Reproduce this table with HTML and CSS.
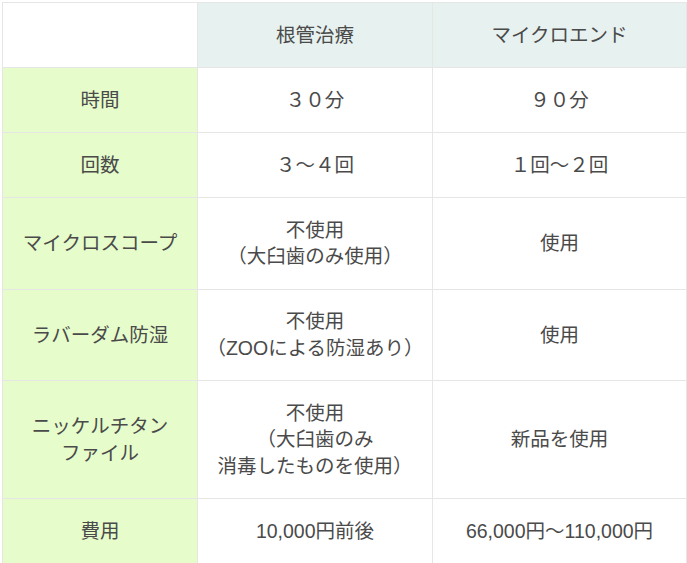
FILE: index.html
```html
<!DOCTYPE html>
<html lang="ja">
<head>
<meta charset="utf-8">
<link rel="stylesheet" href="styles.css">
</head>
<body>
<table class="cmp">
  <colgroup>
    <col class="c1">
    <col class="c2">
    <col class="c3">
  </colgroup>
  <thead>
    <tr>
      <th class="blank"></th>
      <th class="head">根管治療</th>
      <th class="head">マイクロエンド</th>
    </tr>
  </thead>
  <tbody>
    <tr>
      <th class="label">時間</th>
      <td>３０分</td>
      <td>９０分</td>
    </tr>
    <tr>
      <th class="label">回数</th>
      <td>３～４回</td>
      <td>１回～２回</td>
    </tr>
    <tr>
      <th class="label">マイクロスコープ</th>
      <td>不使用<br>（大臼歯のみ使用）</td>
      <td>使用</td>
    </tr>
    <tr>
      <th class="label">ラバーダム防湿</th>
      <td>不使用<br>（ZOOによる防湿あり）</td>
      <td>使用</td>
    </tr>
    <tr>
      <th class="label">ニッケルチタン<br>ファイル</th>
      <td>不使用<br>（大臼歯のみ<br>消毒したものを使用）</td>
      <td>新品を使用</td>
    </tr>
    <tr>
      <th class="label">費用</th>
      <td>10,000円前後</td>
      <td>66,000円～110,000円</td>
    </tr>
  </tbody>
</table>
</body>
</html>
```

FILE: styles.css
```css
html, body {
  margin: 0;
  padding: 0;
  background: #ffffff;
}

body {
  padding: 2px 0 0 2px;
  font-family: "Liberation Sans", "Noto Sans CJK JP", sans-serif;
  color: #4a4a4a;
}

.cmp {
  border-collapse: collapse;
  table-layout: fixed;
  width: 684px;
}

.c1 { width: 195px; }
.c2 { width: 235px; }
.c3 { width: 254px; }

.cmp th,
.cmp td {
  border: 1px solid #e6e6e6;
  padding: 18.75px 6px;
  font-size: 19.5px;
  line-height: 26.5px;
  font-weight: normal;
  text-align: center;
  vertical-align: middle;
}

.cmp .blank {
  background: #ffffff;
}

.cmp .head {
  background: #e7f1ef;
}

.cmp .label {
  background: #e6fccb;
}
```
